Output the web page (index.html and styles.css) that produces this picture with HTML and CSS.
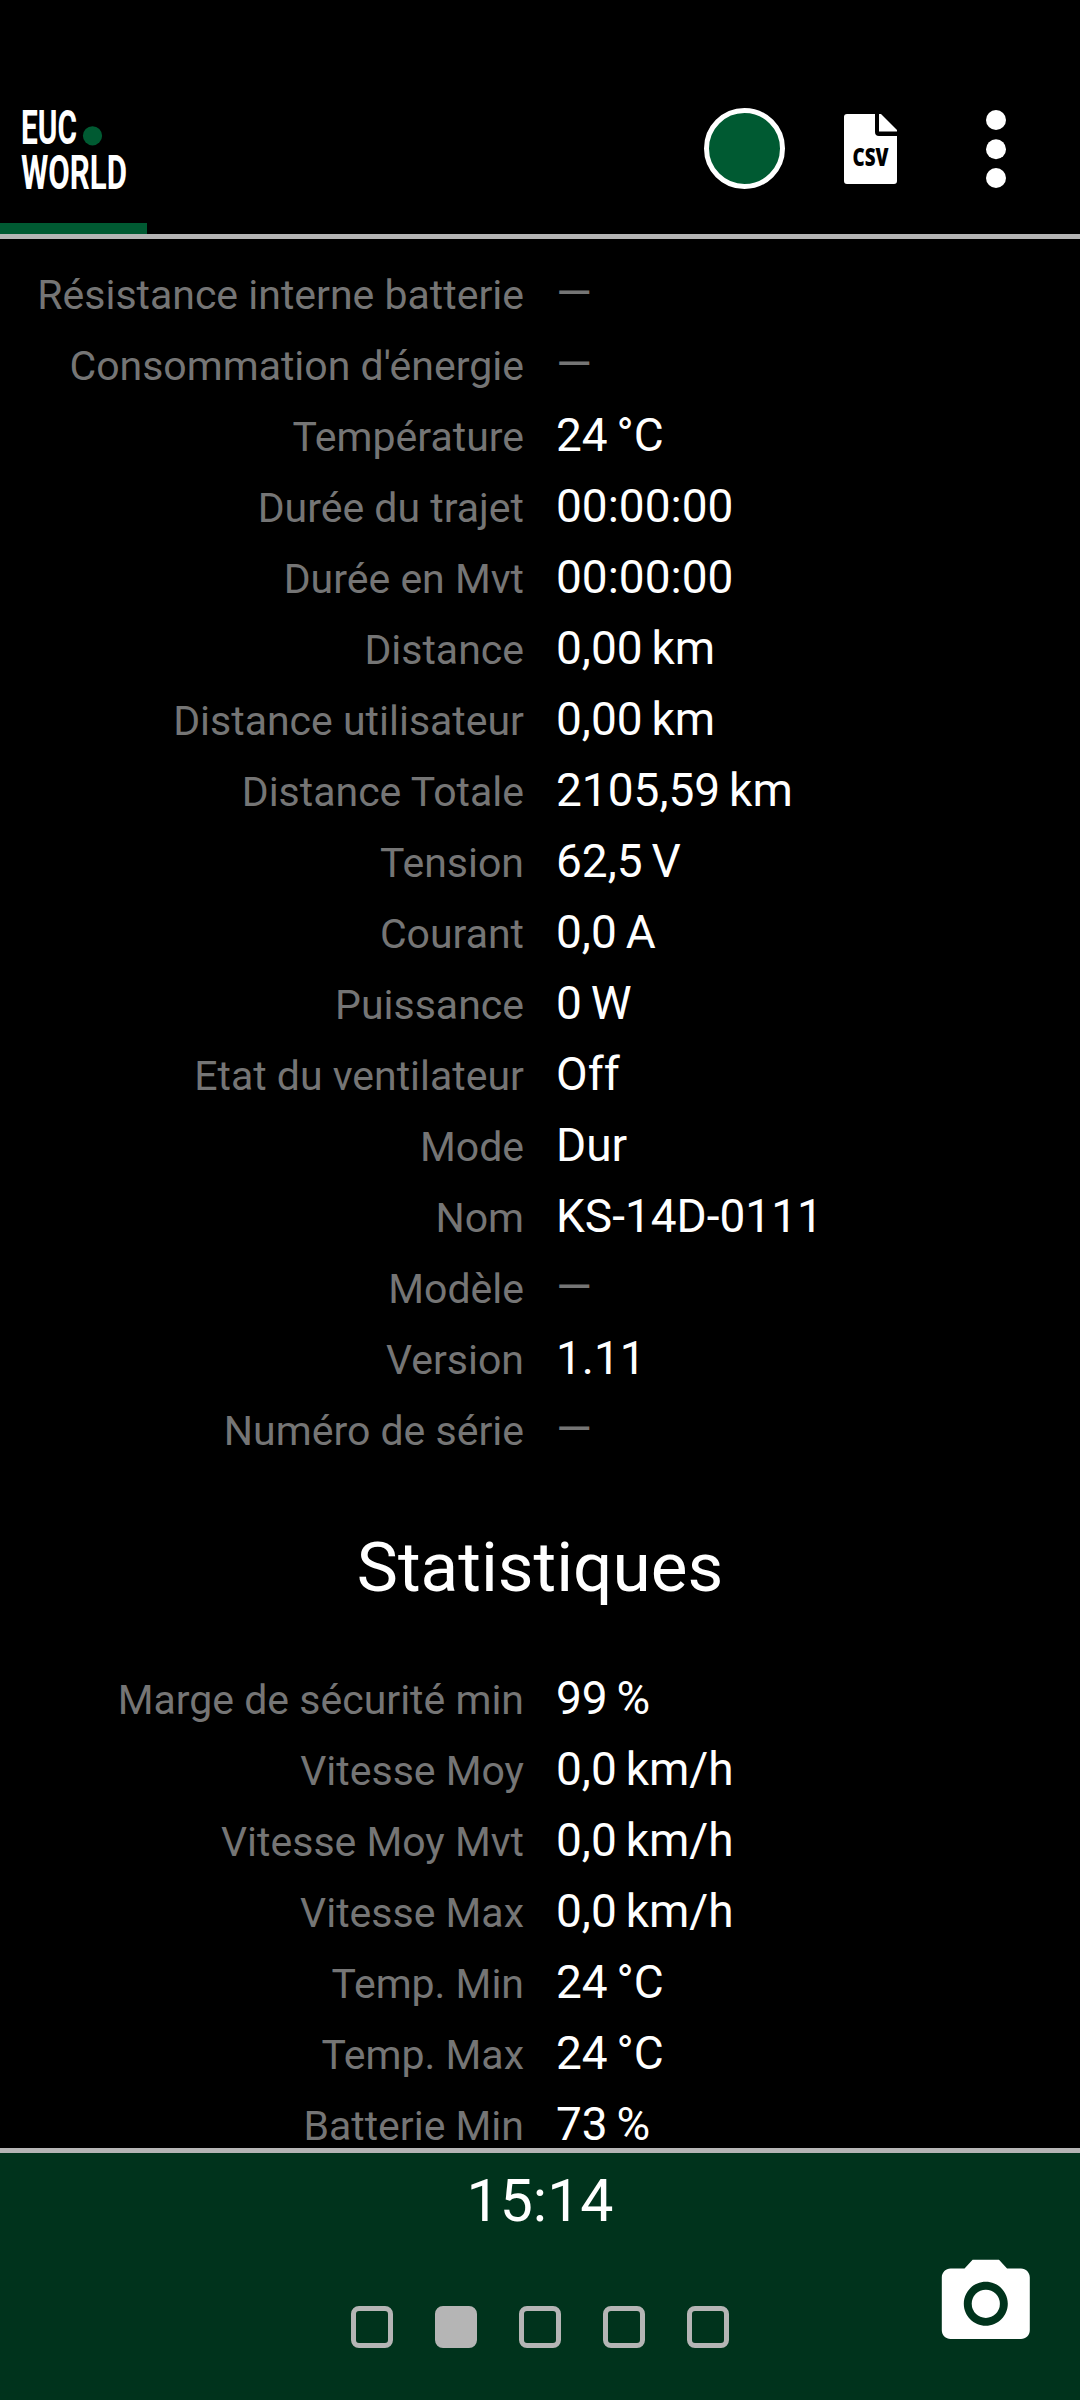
FILE: index.html
```html
<!DOCTYPE html>
<html lang="fr">
<head>
<meta charset="utf-8">
<title>EUC World</title>
<link rel="stylesheet" href="styles.css">
</head>
<body>
<div class="app">
  <header class="topbar">
    <svg class="logo" width="120" height="90" viewBox="0 0 120 90" role="img" aria-label="EUC World">
      <text class="logo-text" x="1" y="38.3" textLength="56" lengthAdjust="spacingAndGlyphs">EUC</text>
      <circle cx="72.5" cy="29.8" r="9.6" fill="#005a32"/>
      <text class="logo-text" x="1" y="82.6" textLength="106" lengthAdjust="spacingAndGlyphs">WORLD</text>
    </svg>
    <div class="actions">
      <span class="status-dot"></span>
      <svg class="csv" width="53" height="70" viewBox="0 0 53 70">
        <path fill="#fff" d="M3 0H31V18Q31 22 35 22H53V67Q53 70 50 70H3Q0 70 0 67V3Q0 0 3 0ZM35 0H37L53 16V17.5H35Z"/>
        <text class="csv-text" x="8.5" y="52" textLength="36" lengthAdjust="spacingAndGlyphs">CSV</text>
      </svg>
      <svg class="more" width="20" height="80" viewBox="0 0 20 80" fill="#fff">
        <circle cx="10" cy="11" r="10"/><circle cx="10" cy="40.3" r="10"/><circle cx="10" cy="69" r="10"/>
      </svg>
    </div>
  </header>
  <div class="progress"><div class="progress-fill"></div></div>
  <main class="content">
    <dl class="rows">
      <dt>Résistance interne batterie</dt><dd class="empty">—</dd>
      <dt>Consommation d'énergie</dt><dd class="empty">—</dd>
      <dt>Température</dt><dd>24 °C</dd>
      <dt>Durée du trajet</dt><dd>00:00:00</dd>
      <dt>Durée en Mvt</dt><dd>00:00:00</dd>
      <dt>Distance</dt><dd>0,00 km</dd>
      <dt>Distance utilisateur</dt><dd>0,00 km</dd>
      <dt>Distance Totale</dt><dd>2105,59 km</dd>
      <dt>Tension</dt><dd>62,5 V</dd>
      <dt>Courant</dt><dd>0,0 A</dd>
      <dt>Puissance</dt><dd>0 W</dd>
      <dt>Etat du ventilateur</dt><dd>Off</dd>
      <dt>Mode</dt><dd>Dur</dd>
      <dt>Nom</dt><dd>KS-14D-0111</dd>
      <dt>Modèle</dt><dd class="empty">—</dd>
      <dt>Version</dt><dd>1.11</dd>
      <dt>Numéro de série</dt><dd class="empty">—</dd>
    </dl>
    <h2 class="title">Statistiques</h2>
    <dl class="rows">
      <dt>Marge de sécurité min</dt><dd>99 %</dd>
      <dt>Vitesse Moy</dt><dd>0,0 km/h</dd>
      <dt>Vitesse Moy Mvt</dt><dd>0,0 km/h</dd>
      <dt>Vitesse Max</dt><dd>0,0 km/h</dd>
      <dt>Temp. Min</dt><dd>24 °C</dd>
      <dt>Temp. Max</dt><dd>24 °C</dd>
      <dt>Batterie Min</dt><dd>73 %</dd>
    </dl>
  </main>
  <footer class="bottombar">
    <div class="clock">15:14</div>
    <nav class="pages">
      <span class="page"></span><span class="page active"></span><span class="page"></span><span class="page"></span><span class="page"></span>
    </nav>
    <svg class="camera" viewBox="0 0 24 24" fill="#fff">
      <circle cx="12" cy="12" r="3.2"/>
      <path d="M9 2L7.17 4H4c-1.1 0-2 .9-2 2v12c0 1.1.9 2 2 2h16c1.1 0 2-.9 2-2V6c0-1.1-.9-2-2-2h-3.17L15 2H9zm3 15c-2.76 0-5-2.24-5-5s2.24-5 5-5 5 2.24 5 5-2.24 5-5 5z"/>
    </svg>
  </footer>
</div>
</body>
</html>
```
FILE: styles.css
```css
* { box-sizing: border-box; }
body {
  margin: 0;
  background: #000;
  color: #fff;
  font-family: Roboto, "Liberation Sans", sans-serif;
}
.app {
  display: flex;
  flex-direction: column;
  width: 1080px;
  height: 2400px;
  overflow: hidden;
}
.topbar {
  display: flex;
  justify-content: space-between;
  align-items: flex-start;
  height: 223px;
  padding: 106px 74px 0 20px;
}
.logo { overflow: visible; }
.logo-text {
  font-family: Roboto, sans-serif;
  font-weight: 700;
  font-size: 47.8px;
  fill: #fff;
}
.actions {
  display: flex;
  align-items: center;
  margin-top: 2px;
}
.status-dot {
  width: 81px;
  height: 81px;
  border: 5px solid #fff;
  border-radius: 50%;
  background: #005a32;
}
.csv {
  margin-left: 59px;
  overflow: visible;
}
.csv-text {
  font-family: "Open Sans", sans-serif;
  font-weight: 800;
  font-size: 24.5px;
  fill: #000;
}
.more { margin-left: 89.5px; }
.progress {
  height: 16px;
  border-bottom: 5px solid #b5b5b5;
}
.progress-fill {
  width: 147px;
  height: 11px;
  background: #005a32;
}
.content {
  height: 1909px;
  padding-top: 19px;
  overflow: hidden;
}
.rows {
  display: grid;
  grid-template-columns: 524px 1fr;
  grid-auto-rows: 71px;
  column-gap: 32px;
  align-items: baseline;
  margin: 0;
  white-space: nowrap;
}
dt {
  color: #757575;
  font-size: 41px;
  line-height: 60px;
  text-align: right;
}
dd {
  margin: 0;
  font-size: 46px;
  line-height: 71px;
  word-spacing: -2.5px;
}
.empty { color: #757575; }
.title {
  margin: 0;
  padding-top: 7px;
  font-size: 69.3px;
  font-weight: 400;
  line-height: 191px;
  text-align: center;
}
.bottombar {
  position: relative;
  flex: 1;
  display: flex;
  flex-direction: column;
  align-items: center;
  border-top: 5px solid #b5b5b5;
  background: #00331c;
}
.clock {
  height: 153px;
  padding-top: 13px;
  font-size: 59px;
  line-height: 70px;
}
.pages {
  display: flex;
  gap: 42px;
}
.page {
  width: 42px;
  height: 42px;
  border: 5px solid #b5b5b5;
  border-radius: 8px;
}
.page.active { background: #b5b5b5; }
.camera {
  position: absolute;
  top: 97.5px;
  left: 932.7px;
  width: 105.6px;
  height: 105.6px;
}
```
